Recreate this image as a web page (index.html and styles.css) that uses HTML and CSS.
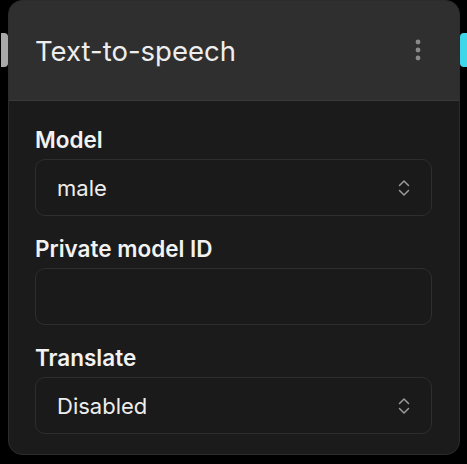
FILE: index.html
```html
<!DOCTYPE html>
<html>
<head>
<meta charset="utf-8">
<link rel="stylesheet" href="styles.css">
</head>
<body>
<div class="node">
  <span class="handle handle-in"></span>
  <span class="handle handle-out"></span>
  <div class="card">
    <div class="header">
      <div class="title">Text-to-speech</div>
      <svg class="kebab" width="8" height="24" viewBox="0 0 8 24"><circle cx="4" cy="4" r="2.4" fill="#8a8a8a"/><circle cx="4" cy="12" r="2.4" fill="#8a8a8a"/><circle cx="4" cy="20" r="2.4" fill="#8a8a8a"/></svg>
    </div>
    <div class="body">
      <div class="field">
        <div class="label">Model</div>
        <div class="control">
          <span class="value">male</span>
          <svg class="chev" width="14" height="20" viewBox="0 0 14 20"><path d="M2.5 7.5 L7 3 L11.5 7.5 M2.5 12.5 L7 17 L11.5 12.5" fill="none" stroke="#9a9a9a" stroke-width="1.5" stroke-linecap="round" stroke-linejoin="round"/></svg>
        </div>
      </div>
      <div class="field">
        <div class="label">Private model ID</div>
        <div class="control"></div>
      </div>
      <div class="field">
        <div class="label">Translate</div>
        <div class="control">
          <span class="value">Disabled</span>
          <svg class="chev" width="14" height="20" viewBox="0 0 14 20"><path d="M2.5 7.5 L7 3 L11.5 7.5 M2.5 12.5 L7 17 L11.5 12.5" fill="none" stroke="#9a9a9a" stroke-width="1.5" stroke-linecap="round" stroke-linejoin="round"/></svg>
        </div>
      </div>
    </div>
  </div>
</div>
</body>
</html>
```
FILE: styles.css
```css
html, body {
  margin: 0;
  padding: 0;
  background: #000;
}
body {
  font-family: Inter, "Noto Sans", sans-serif;
  color: #ececec;
  padding: 0 7px 0 8px;
  height: 464px;
  box-sizing: border-box;
}
.node {
  position: relative;
  width: 452px;
}
.card {
  background: #1b1b1b;
  border: 1px solid #2c2c2c;
  border-radius: 14px;
  overflow: hidden;
  height: 455px;
  box-sizing: border-box;
}
.header {
  height: 100px;
  background: #2f2f2f;
  border-bottom: 1px solid #3a3a3a;
  box-sizing: border-box;
  display: flex;
  align-items: center;
  justify-content: space-between;
  padding: 0 37px 0 26px;
}
.title {
  font-size: 27.5px;
  font-weight: 400;
  color: #eeeeee;
}
.kebab {
  display: block;
  margin-top: -2px;
}
.body {
  padding: 26px 27px 0 26px;
  display: flex;
  flex-direction: column;
  gap: 20px;
}
.field {
  display: flex;
  flex-direction: column;
  gap: 7px;
}
.label {
  font-size: 22.5px;
  font-weight: 600;
  color: #f2f2f2;
  line-height: 25px;
}
.control {
  height: 57px;
  box-sizing: border-box;
  border: 1px solid #2e2e2e;
  border-radius: 10px;
  background: #1a1a1a;
  display: flex;
  align-items: center;
  justify-content: space-between;
  padding: 0 20px 0 21px;
}
.value {
  font-size: 22px;
  color: #ededed;
}
.chev {
  display: block;
}
.handle {
  position: absolute;
  top: 33px;
  width: 7px;
  height: 34px;
}
.handle-in {
  left: -7px;
  background: #a9a9a9;
  border-radius: 0 4px 4px 0;
}
.handle-out {
  right: -7px;
  background: #3fd6ea;
  border-radius: 4px 0 0 4px;
}
```
